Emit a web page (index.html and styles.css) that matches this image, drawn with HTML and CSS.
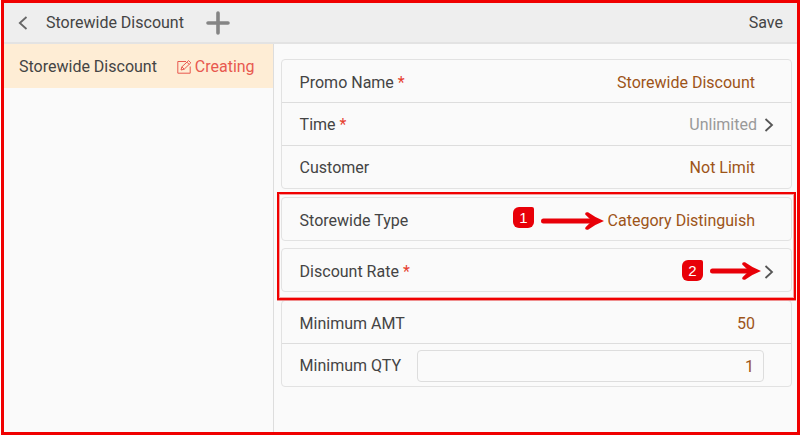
FILE: index.html
```html
<!DOCTYPE html>
<html lang="en">
<head>
<meta charset="utf-8">
<meta name="viewport" content="width=device-width, initial-scale=1">
<title>Storewide Discount</title>
<link rel="stylesheet" href="styles.css">
</head>
<body>
<div class="app">
  <header class="topbar">
    <button class="icon-button" type="button" aria-label="Back">
      <svg width="10" height="14" viewBox="0 0 10 14"><path d="M8.500 1 1.800 7l6.700 6" fill="none" stroke="#666" stroke-width="1.800"/></svg>
    </button>
    <h1 class="title">Storewide Discount</h1>
    <button class="icon-button" type="button" aria-label="Add">
      <svg width="24" height="24" viewBox="0 0 24 24"><path d="M12 2v20M2 12h20" fill="none" stroke="#858585" stroke-width="3.600" stroke-linecap="round"/></svg>
    </button>
    <button class="save" type="button">Save</button>
  </header>
  <div class="body">
    <nav class="sidebar">
      <a class="promo" href="#form">
        <span>Storewide Discount</span>
        <span class="status">
          <svg width="15" height="14" viewBox="0 0 15 14" fill="none" stroke="#e8594f" stroke-width="1"><path d="M9 1.500H.8v11.700h12.400V6.500"/><path d="m4 10 .9-3.200L11.600.6l2.200 2.200-6.600 6.400L4 10Zm.9-3.200 2.300 2.400M10 2.200l2.200 2.200"/></svg>
          Creating
        </span>
      </a>
    </nav>
    <main class="form" id="form">
      <section class="card">
        <div class="row">
          <label for="name">Promo Name <span class="required">*</span></label>
          <input class="value" id="name" type="text" value="Storewide Discount">
        </div>
        <div class="row">
          <span>Time <span class="required">*</span></span>
          <button class="value picker muted" type="button">Unlimited
            <svg width="10" height="14" viewBox="0 0 10 14"><path d="m1.500 1 6.500 6-6.500 6" fill="none" stroke="#555" stroke-width="1.800"/></svg>
          </button>
        </div>
        <div class="row">
          <span>Customer</span>
          <button class="value" type="button">Not Limit</button>
        </div>
      </section>
      <div class="highlight">
        <section class="card">
          <div class="row">
            <span>Storewide Type</span>
            <button class="value" type="button">Category Distinguish</button>
            <span class="badge badge-one">1</span>
            <svg class="arrow arrow-one" width="64" height="20" viewBox="0 0 64 20"><path d="M2.500 10H50" stroke="#e80008" stroke-width="5" stroke-linecap="round"/><path d="M47 1.200Q55 7 63 10 55 13 47 18.800C44 19.300 43.500 17 45 15.800L51 10 45 4.200C43.500 3 44 .7 47 1.200Z" fill="#e80008"/></svg>
          </div>
        </section>
        <section class="card">
          <div class="row">
            <span>Discount Rate <span class="required">*</span></span>
            <button class="value picker" type="button" aria-label="Discount Rate">
              <svg width="10" height="14" viewBox="0 0 10 14"><path d="m1.500 1 6.500 6-6.500 6" fill="none" stroke="#555" stroke-width="1.800"/></svg>
            </button>
            <span class="badge badge-two">2</span>
            <svg class="arrow arrow-two" width="52" height="20" viewBox="12 0 52 20"><path d="M14.500 10H50" stroke="#e80008" stroke-width="5" stroke-linecap="round"/><path d="M47 1.200Q55 7 63 10 55 13 47 18.800C44 19.300 43.500 17 45 15.800L51 10 45 4.200C43.500 3 44 .7 47 1.200Z" fill="#e80008"/></svg>
          </div>
        </section>
      </div>
      <section class="card">
        <div class="row">
          <label for="amount">Minimum AMT</label>
          <input class="value" id="amount" type="text" inputmode="decimal" value="50">
        </div>
        <div class="row">
          <label for="quantity">Minimum QTY</label>
          <input class="value boxed" id="quantity" type="text" inputmode="numeric" value="1">
        </div>
      </section>
    </main>
  </div>
</div>
</body>
</html>
```
FILE: styles.css
```css
* {
  box-sizing: border-box;
}

body {
  margin: 0;
  padding-left: 1px;
  background: #fff;
  color: #444;
  font: 16px/20px Roboto, "Liberation Sans", sans-serif;
}

button,
input {
  margin: 0;
  padding: 0;
  border: 0;
  background: none;
  color: inherit;
  font: inherit;
}

svg {
  display: block;
}

.app {
  display: flex;
  flex-direction: column;
  min-height: 100vh;
  border: 3px solid #f00000;
  background: #fafafa;
}

.topbar {
  display: flex;
  align-items: center;
  gap: 18px;
  height: 41px;
  padding: 0 14px;
  border-bottom: 2px solid #e3e3e3;
  background: #eee;
}

.title {
  margin: 0 4px 0 0;
  font-size: 16px;
  font-weight: 400;
}

.save {
  margin-left: auto;
}

.body {
  display: grid;
  flex: 1;
  grid-template-columns: 34% 1fr;
}

.sidebar {
  border-right: 1px solid #ddd;
}

.promo {
  display: flex;
  align-items: center;
  justify-content: space-between;
  height: 44px;
  padding: 2px 18px 0 15px;
  background: #feedd5;
  color: inherit;
  text-decoration: none;
}

.status {
  display: flex;
  align-items: center;
  gap: 3px;
  color: #e8594f;
}

.form {
  display: flex;
  flex-direction: column;
  gap: 8px;
  padding: 15px 5px 15px 7px;
}

.card {
  border: 1px solid #e2e2e2;
  border-radius: 4px;
}

.row {
  position: relative;
  display: flex;
  align-items: center;
  justify-content: space-between;
  gap: 16px;
  height: 42px;
  padding: 4px 36px 0 18px;
}

.row + .row {
  height: 43px;
  padding-top: 2px;
  border-top: 1px solid #ddd;
}

.required {
  color: #e6402f;
}

.value {
  color: #9d5418;
  text-align: right;
}

.muted {
  color: #999;
}

.picker {
  display: flex;
  align-items: center;
  gap: 7px;
  margin-right: -19px;
}

.boxed {
  flex: 1;
  height: 32px;
  margin-right: -9px;
  padding-right: 9px;
  border: 1px solid #ddd;
  border-radius: 4px;
}

.highlight {
  position: relative;
  display: flex;
  flex-direction: column;
  gap: 7px;
}

.highlight::after {
  position: absolute;
  inset: -5px -4px -8px -4px;
  border: 2px solid #f00000;
  box-shadow: inset 0 0 0 1px #f5a0a0, 0 1px #ee8f8f;
  content: "";
  pointer-events: none;
}

.badge {
  position: absolute;
  width: 21px;
  height: 21px;
  border-radius: 6px 2px 6px 6px;
  background: #e80008;
  color: #fff;
  font: 15px/22px "Liberation Sans", sans-serif;
  text-align: center;
}

.badge-one {
  top: 9px;
  right: 257px;
}

.badge-two {
  top: 11px;
  right: 88px;
}

.arrow {
  position: absolute;
}

.arrow-one {
  top: 13px;
  right: 186px;
}

.arrow-two {
  top: 12px;
  right: 29px;
}
```
